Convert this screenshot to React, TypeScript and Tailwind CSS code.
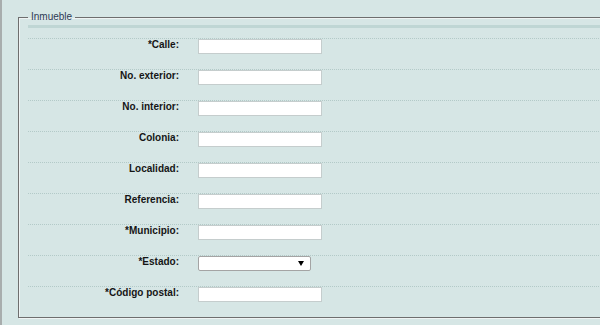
const fields = [
  { label: "*Calle:" },
  { label: "No. exterior:" },
  { label: "No. interior:" },
  { label: "Colonia:" },
  { label: "Localidad:" },
  { label: "Referencia:" },
  { label: "*Municipio:" },
  { label: "*Estado:", select: true },
  { label: "*Código postal:" },
];

const App = () => {
  return (
    <div className="w-[600px] h-[325px] overflow-hidden bg-[#d6e6e5] border-l-2 border-[#a8adad] pl-4 pt-[11px] font-['Liberation_Sans',Arial,sans-serif]">
      <fieldset className="w-[640px] border border-[#6e6e6e] pl-[9px] pb-0 shadow-[inset_1px_1px_0_#eef3f3,1px_1px_0_#eef3f3]">
        <legend className="px-[3px] text-[10px] leading-[12px] text-[#2e3a55]">
          Inmueble
        </legend>

        <div className="mt-[2px] h-[3px] bg-[#bfd6d4]" />

        <div className="mt-[10px]">
          {fields.map((f) => (
            <div
              key={f.label}
              className="h-[31px] flex items-start border-t border-dotted border-[#b3cac8]"
            >
              <label className="w-[151px] text-right text-[10px] leading-[12px] font-bold text-[#151515]">
                {f.label}
              </label>

              {f.select ? (
                <div className="ml-[19px] w-[113px] h-[15px] bg-white border border-[#a4a4a4] rounded-[2px] flex items-center justify-end pr-[6px]">
                  <svg width="6" height="5" viewBox="0 0 6 5">
                    <path d="M0 0H6L3 5Z" fill="#000" />
                  </svg>
                </div>
              ) : (
                <input
                  type="text"
                  className="ml-[19px] w-[124px] h-[15px] bg-white border border-[#c5cdcd] outline-none"
                />
              )}
            </div>
          ))}
        </div>
      </fieldset>
    </div>
  );
};

export default App;
